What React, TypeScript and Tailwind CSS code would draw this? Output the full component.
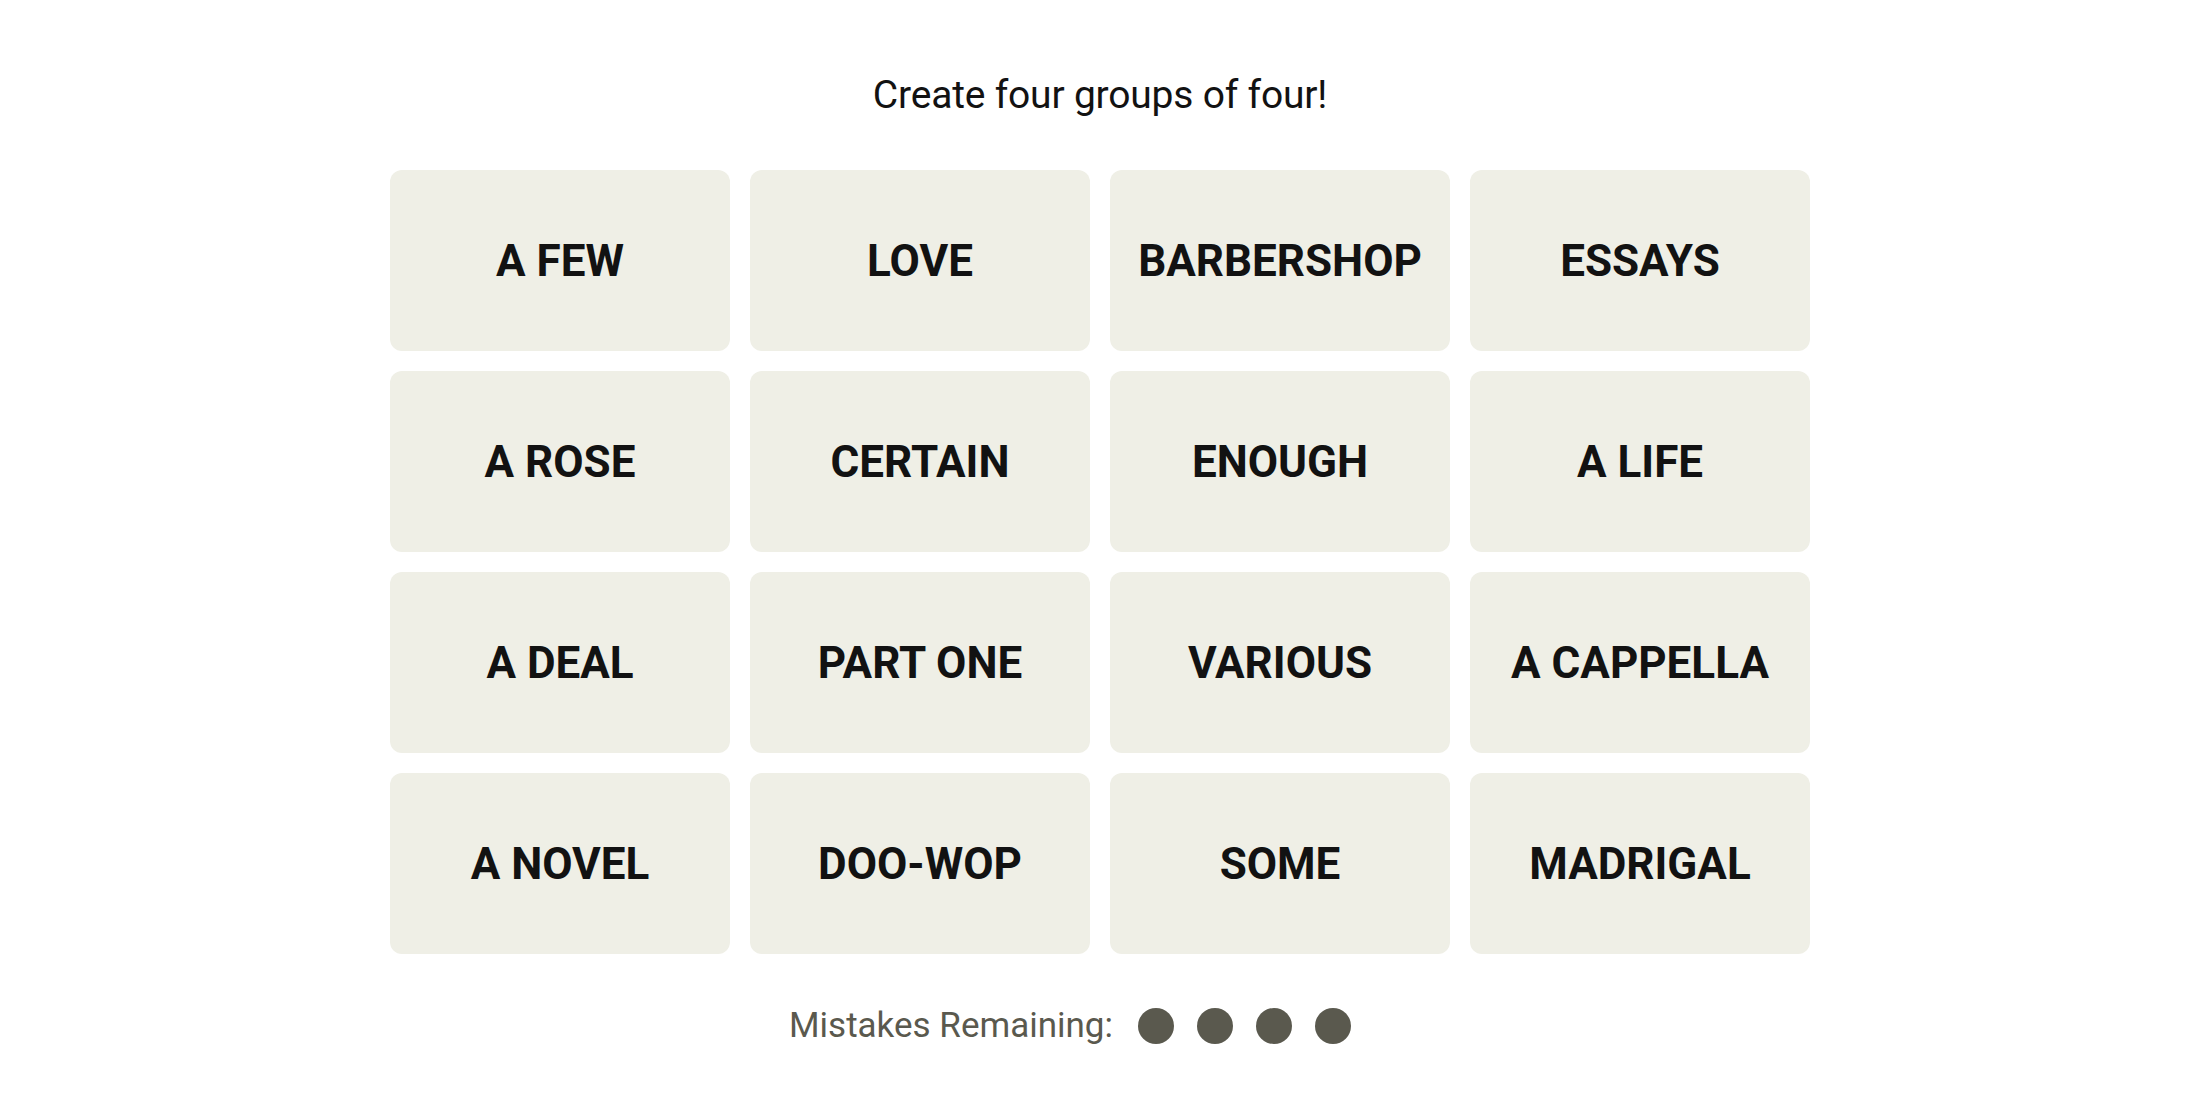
const words = [
  'A FEW', 'LOVE', 'BARBERSHOP', 'ESSAYS',
  'A ROSE', 'CERTAIN', 'ENOUGH', 'A LIFE',
  'A DEAL', 'PART ONE', 'VARIOUS', 'A CAPPELLA',
  'A NOVEL', 'DOO-WOP', 'SOME', 'MADRIGAL',
];

export default function App() {
  return (
    <div className="min-h-screen w-full bg-white flex flex-col items-center pt-[75px] font-['Roboto',sans-serif]">
      <h1 className="text-[39px] leading-[40px] font-normal text-[#121212] tracking-[-0.2px]">
        Create four groups of four!
      </h1>

      <div className="mt-[55px] grid grid-cols-[repeat(4,340px)] auto-rows-[181px] gap-x-[20px] gap-y-[20px]">
        {words.map((w) => (
          <button
            key={w}
            className="rounded-[12px] bg-[#efefe6] flex items-center justify-center text-[44px] font-bold text-[#121212] uppercase"
          >
            {w}
          </button>
        ))}
      </div>

      {/* row sits a little left of centre, as in the game */}
      <div className="mt-[52px] flex items-center h-[40px] pr-[60px]">
        <span className="text-[35px] text-[#5a594e] leading-[40px]">Mistakes Remaining:</span>
        <div className="flex items-center gap-[23px] ml-[25px]">
          {[0, 1, 2, 3].map((i) => (
            <span key={i} className="block w-[36px] h-[36px] rounded-full bg-[#5a594e]" />
          ))}
        </div>
      </div>
    </div>
  );
}
